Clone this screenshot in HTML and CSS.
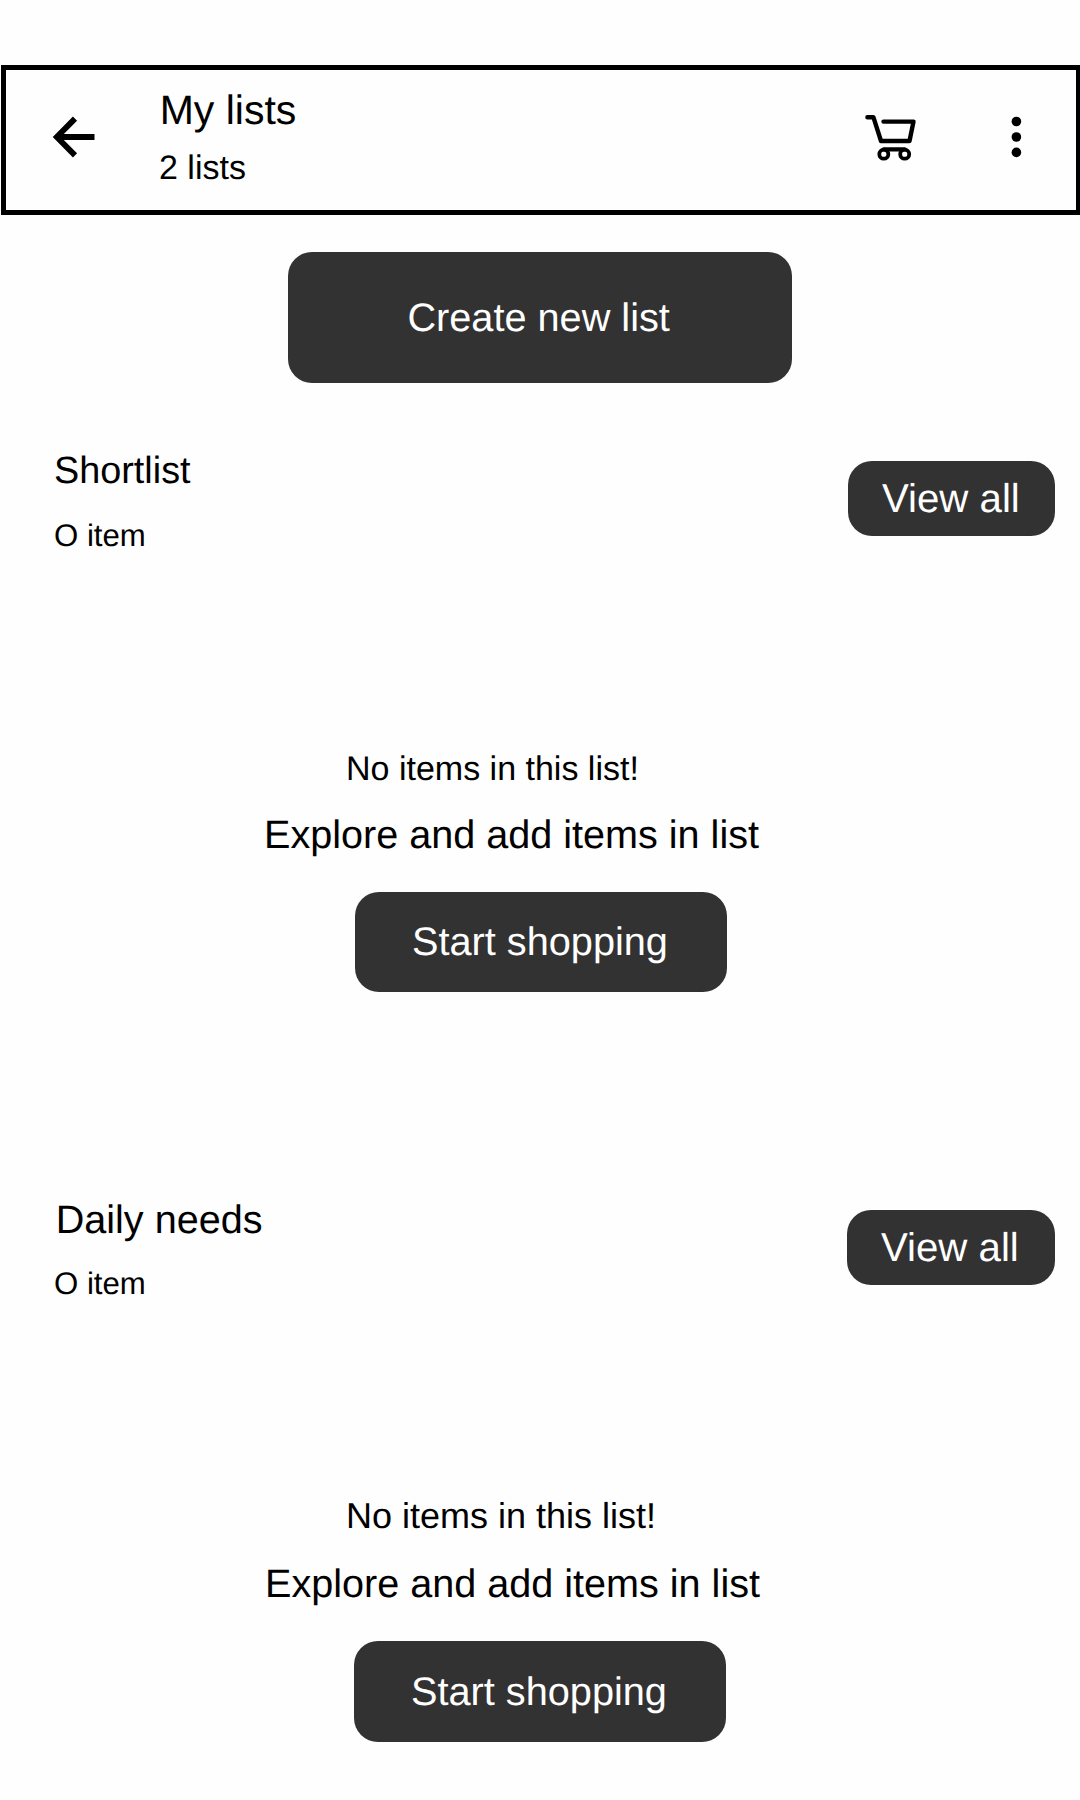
FILE: index.html
```html
<!DOCTYPE html>
<html lang="en">
<head>
<meta charset="utf-8">
<title>My lists</title>
<link rel="stylesheet" href="styles.css">
</head>
<body>
<header class="topbar">
  <svg class="icon-back" width="44" height="44" viewBox="0 0 44 44" fill="none" stroke="#000" stroke-width="5.8" aria-label="Back">
    <path d="M42.5 22H5M23 3.6 4.8 22 23 40.4"/>
  </svg>
  <div class="heading">
    <h1 class="title">My lists</h1>
    <p class="count">2 lists</p>
  </div>
  <svg class="icon-cart" width="54" height="50" viewBox="0 0 54 50" fill="none" stroke="#000" stroke-width="4.4" stroke-linecap="round" stroke-linejoin="round" aria-label="Cart">
    <path d="M3.4 4.2h6L17 28h28.5L49.5 8.6H19.5"/>
    <path d="M20 36.4H40.5"/>
    <circle cx="19.8" cy="41.2" r="4.5" stroke-width="3.8"/>
    <circle cx="40.7" cy="41.2" r="4.5" stroke-width="3.8"/>
  </svg>
  <svg class="icon-menu" width="14" height="44" viewBox="0 0 14 44" aria-label="More">
    <circle cx="7.4" cy="6.5" r="4.8"/>
    <circle cx="7.4" cy="22" r="4.8"/>
    <circle cx="7.4" cy="37.4" r="4.8"/>
  </svg>
</header>
<main>
  <button class="btn create">Create new list</button>

  <section class="list shortlist">
    <div class="list-head">
      <div>
        <h2 class="name">Shortlist</h2>
        <p class="items">O item</p>
      </div>
      <button class="btn view">View all</button>
    </div>
    <div class="empty">
      <p class="note">No items in this list!</p>
      <p class="hint">Explore and add items in list</p>
      <button class="btn shop">Start shopping</button>
    </div>
  </section>

  <section class="list daily">
    <div class="list-head">
      <div>
        <h2 class="name">Daily needs</h2>
        <p class="items">O item</p>
      </div>
      <button class="btn view">View all</button>
    </div>
    <div class="empty">
      <p class="note">No items in this list!</p>
      <p class="hint">Explore and add items in list</p>
      <button class="btn shop">Start shopping</button>
    </div>
  </section>
</main>
</body>
</html>
```
FILE: styles.css
```css
* { box-sizing: border-box; }

body {
  margin: 0;
  padding-top: 65px;
  height: 1800px;
  overflow: hidden;
  background: #fefefe;
  color: #000;
  font-family: "Liberation Sans", Arial, sans-serif;
  text-rendering: geometricPrecision;
  white-space: nowrap;
}

h1, h2, p { margin: 0; font-weight: 400; }
svg { display: block; flex: none; }

.topbar {
  display: flex;
  align-items: flex-start;
  height: 150px;
  margin-left: 1px;
  padding-left: 46px;
  border: 5px solid #000;
  border-right-width: 4px;
}
.icon-back { margin-top: 45px; }
.heading { margin: 17px auto 0 63px; }
.title { padding-left: 0.7px; font-size: 41px; line-height: 46px; }
.count { margin-top: 16px; font-size: 34px; line-height: 38px; }
.icon-cart { margin-top: 43px; }
.icon-menu { margin: 45px 53px 0 91px; }

.btn {
  display: block;
  border: 0;
  border-radius: 24px;
  background: #323232;
  color: #fff;
  font-family: inherit;
  font-size: 39.7px;
  line-height: 44px;
  text-align: left;
  text-rendering: inherit;
}

.create {
  width: 504px;
  height: 131px;
  margin: 37px 0 0 288px;
  padding: 44px 0 43px 119.4px;
}

.list-head {
  display: flex;
  justify-content: space-between;
  align-items: flex-start;
  padding: 0 25px 0 54px;
}
.items { font-size: 31.2px; line-height: 36px; }
.view {
  width: 207px;
  height: 75px;
  margin-top: 13px;
  padding: 15px 0 15px 34px;
  font-size: 40.2px;
  line-height: 45px;
}
.hint {
  margin: 25px 0 35px 264px;
  font-size: 39.6px;
  line-height: 44px;
}
.shop {
  width: 372px;
  height: 100px;
  margin-left: 355px;
  padding: 28px 0 28px 57px;
}

.shortlist { padding-top: 65px; }
.shortlist .name { padding-top: 2px; font-size: 37.8px; line-height: 42px; }
.shortlist .items { margin-top: 26px; }
.shortlist .note {
  margin: 196px 0 0 346px;
  font-size: 34px;
  line-height: 38px;
}

.daily { padding-top: 205px; }
.daily .name { margin-left: 1.7px; padding-top: 1px; font-size: 39.6px; line-height: 44px; }
.daily .items { margin-top: 24px; }
.daily .view { width: 208px; }
.daily .note {
  margin: 193px 0 0 346px;
  font-size: 36px;
  line-height: 41px;
}
.daily .hint { margin-top: 26px; margin-left: 265px; }
.daily .shop {
  height: 101px;
  margin-left: 354px;
  padding-top: 29px;
}
```
